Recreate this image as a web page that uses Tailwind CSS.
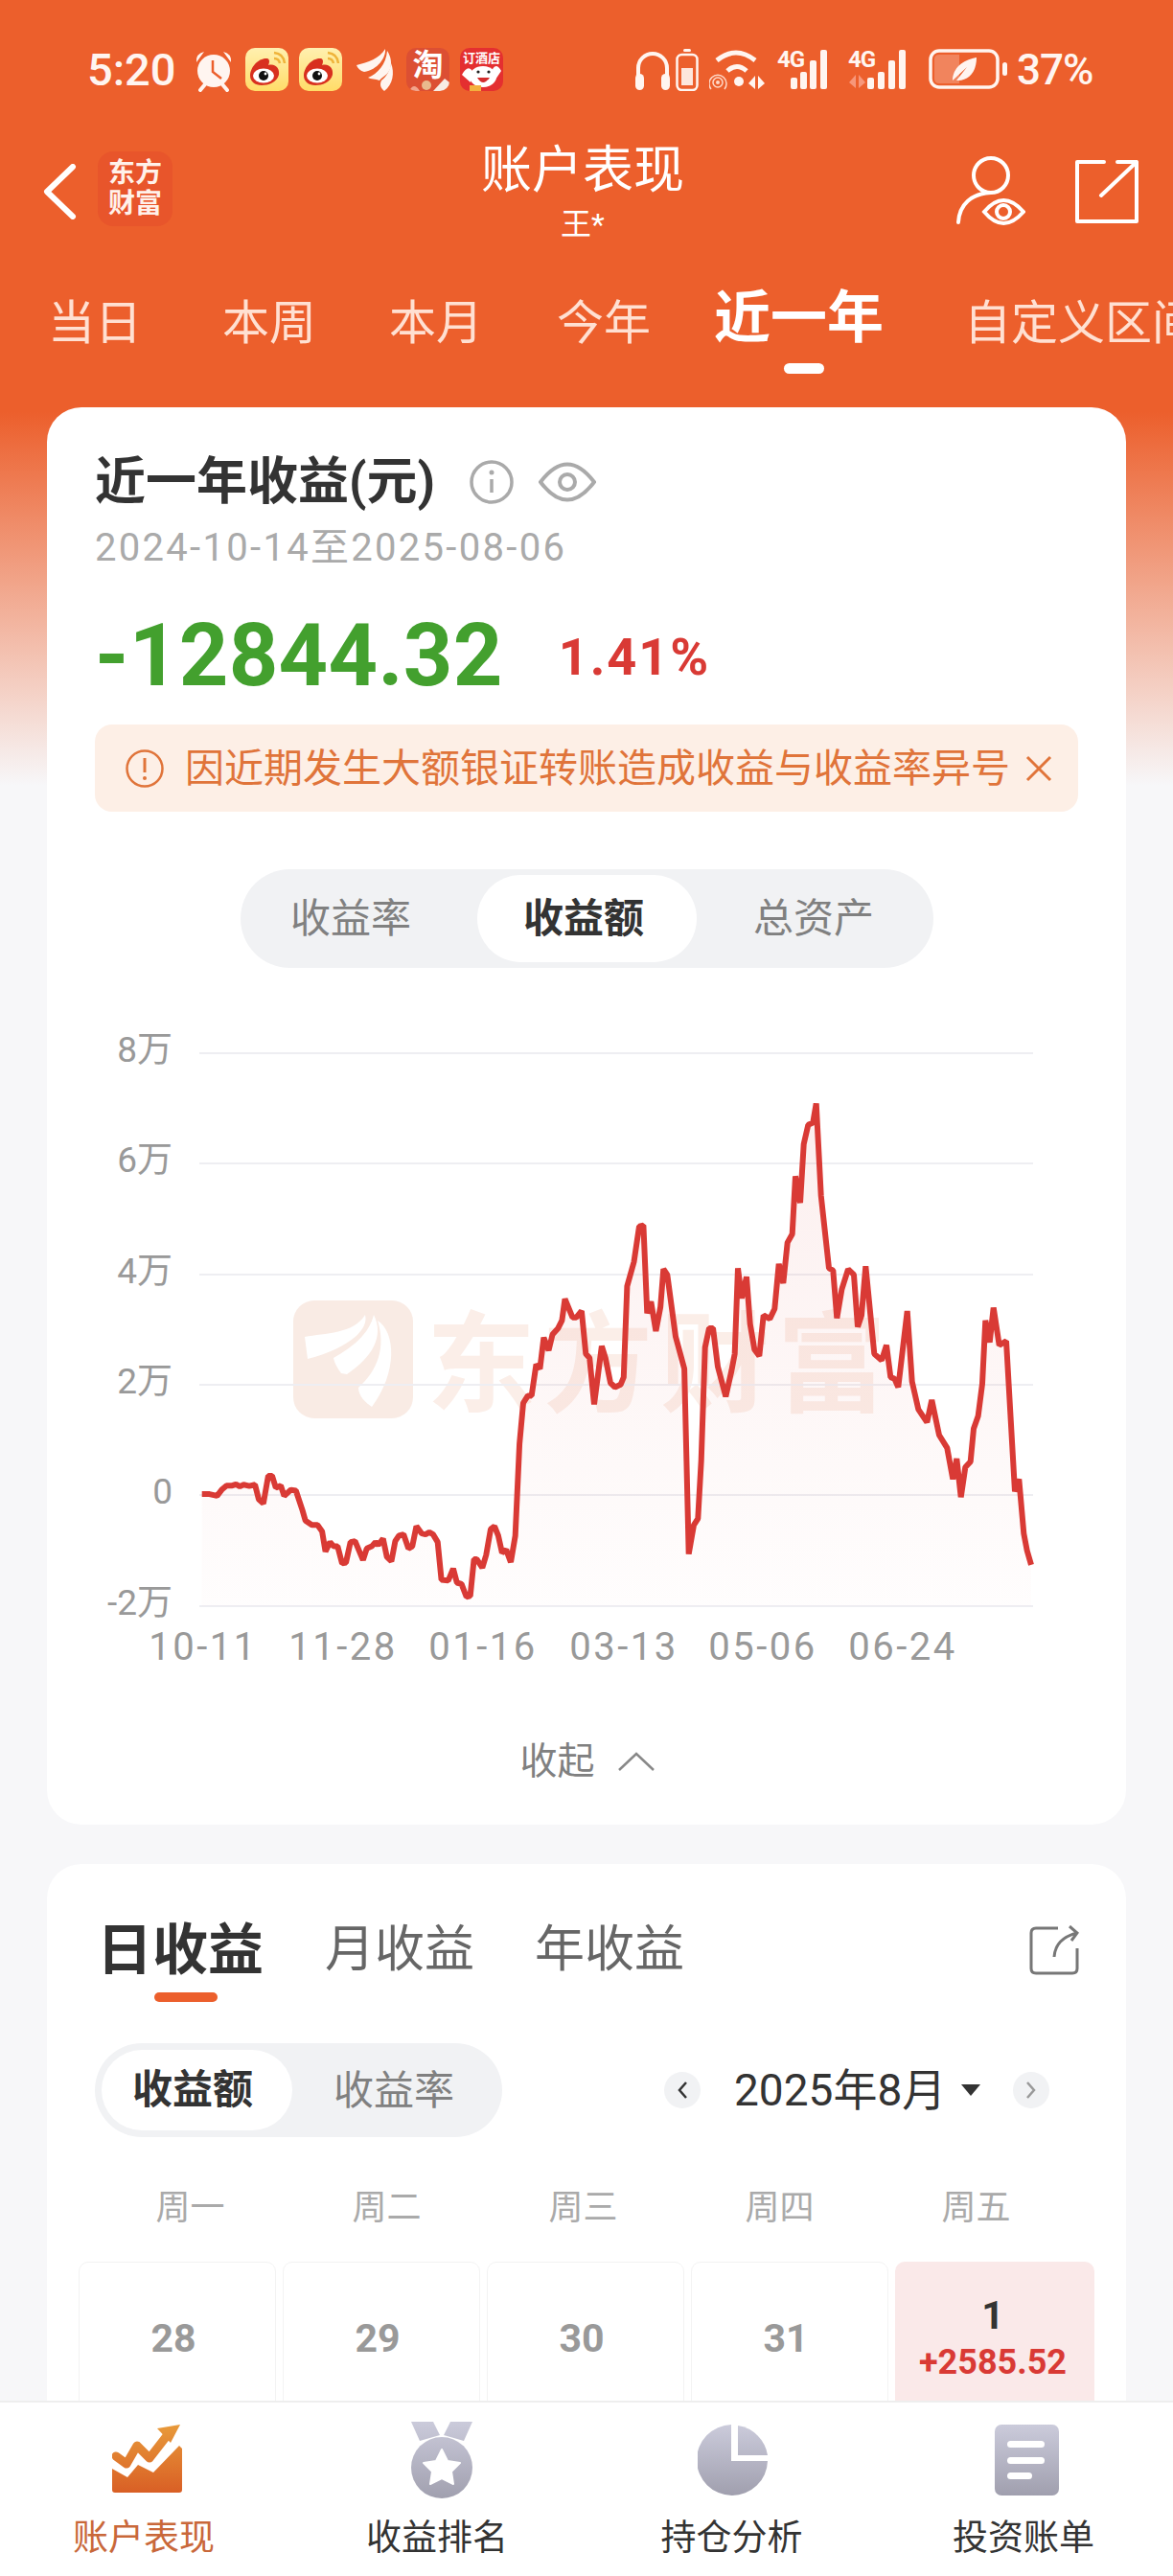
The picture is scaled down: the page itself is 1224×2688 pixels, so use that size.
<!DOCTYPE html>
<html>
  <head>
    <meta charset="utf-8" />
    <script src="https://cdn.jsdelivr.net/npm/@tailwindcss/browser@4"></script>
  </head>
  <body class="bg-white">
    <div class="w-[1224px] h-[2688px] flex flex-col overflow-hidden font-['Roboto','Noto_Sans_CJK_SC',sans-serif] text-[#333]">
      <main class="flex-1 min-h-0 overflow-hidden bg-[linear-gradient(#ec5f2c_0,#ec5f2c_430px,#f7f7f9_820px)]">
        <!-- status bar -->
        <div class="h-[150px] pt-[50px] flex items-start text-[#fff5f0]">
          <span class="ml-[91px] w-[111px] text-[47px] leading-[46px] font-medium">5:20</span>
          <svg class="w-[42px] h-[45px] mt-[1px]" viewBox="0 0 42 45">
            <circle cx="21" cy="23" r="17" fill="#fff5f0" />
            <path d="M3 14 Q2 5 11 3 Z M39 14 Q40 5 31 3 Z" fill="#fff5f0" />
            <path d="M7 43 L12 37 M35 43 L30 37" stroke="#fff5f0" stroke-width="4" stroke-linecap="round" />
            <path d="M20 12 V24 L29 31" fill="none" stroke="#ec5f2c" stroke-width="2.5" />
          </svg>
          <svg class="w-[45px] h-[45px] ml-[12px]" viewBox="0 0 45 45">
            <defs><linearGradient id="wb" x1="0" y1="0" x2="0" y2="1"><stop offset="0" stop-color="#fff0b0" /><stop offset="1" stop-color="#ffdc68" /></linearGradient></defs>
            <rect width="45" height="45" rx="10" fill="url(#wb)" />
            <path d="M5 29 C5 20 14 10 23 11 C26 12 25 16 24 18 C32 16 36 22 35 28 C33 36 24 39 17 39 C10 39 5 35 5 29Z" fill="#d8301f" />
            <ellipse cx="19" cy="29" rx="11" ry="7.5" fill="#fff" />
            <circle cx="19" cy="29" r="5" fill="#111" />
            <circle cx="21" cy="27" r="1.4" fill="#fff" />
            <path d="M30 5 Q40 6 41 16 M30 11 Q35 11 36 16" fill="none" stroke="#efb33a" stroke-width="2.5" />
          </svg>
          <svg class="w-[45px] h-[45px] ml-[11px]" viewBox="0 0 45 45">
            <rect width="45" height="45" rx="10" fill="url(#wb)" />
            <path d="M5 29 C5 20 14 10 23 11 C26 12 25 16 24 18 C32 16 36 22 35 28 C33 36 24 39 17 39 C10 39 5 35 5 29Z" fill="#d8301f" />
            <ellipse cx="19" cy="29" rx="11" ry="7.5" fill="#fff" />
            <circle cx="19" cy="29" r="5" fill="#111" />
            <circle cx="21" cy="27" r="1.4" fill="#fff" />
            <path d="M30 5 Q40 6 41 16 M30 11 Q35 11 36 16" fill="none" stroke="#efb33a" stroke-width="2.5" />
          </svg>
          <svg class="w-[40px] h-[45px] ml-[15px]" viewBox="0 0 40 45">
            <path d="M0 18 C12 15 24 11 30 1 C31 10 22 23 8 25 C4 24 1 21 0 18Z" fill="#fff5f0" />
            <path d="M12 31 C22 27 31 17 32 3 C36 9 37 16 35 22 C33 28 27 30 24 34 C20 32 15 33 12 31Z" fill="#fff5f0" />
            <path d="M36 16 C40 26 38 38 29 45 C25 42 24 38 26 34 C31 30 35 24 36 16Z" fill="#fff5f0" />
          </svg>
          <div class="relative w-[45px] h-[45px] ml-[12px] rounded-[10px] bg-[#dc4f33] flex justify-center overflow-hidden">
            <span class="text-[32px] leading-[36px] font-bold text-white">淘</span>
            <svg class="absolute left-0 bottom-0 w-[45px] h-[14px]" viewBox="0 0 45 14">
              <path d="M3 14 Q8 4 14 14 Z" fill="#f2a48c" />
              <circle cx="21" cy="8" r="5" fill="#e9b98d" />
              <path d="M28 14 L40 1 L45 5 V14Z" fill="#f7ece4" />
            </svg>
          </div>
          <div class="w-[45px] h-[45px] ml-[11px] rounded-[10px] bg-[#e42f30] overflow-hidden relative">
            <span class="absolute left-[3px] top-[4px] text-[13px] leading-[14px] font-bold text-white whitespace-nowrap">订酒店</span>
            <svg class="absolute inset-0" viewBox="0 0 45 45">
              <ellipse cx="24" cy="30" rx="14" ry="11" fill="#fff" />
              <path d="M2 28 Q8 17 13 24 L11 36 Z M43 24 Q38 15 34 22 L37 33Z" fill="#fff" />
              <path d="M18 31 Q24 41 31 31 Z" fill="#d42c2c" />
              <circle cx="19" cy="25" r="1.6" fill="#222" /><circle cx="30" cy="25" r="1.6" fill="#222" />
              <rect x="10" y="39" width="12" height="6" fill="#f3b03e" />
            </svg>
          </div>
          <svg class="w-[38px] h-[42px] ml-[137px] mt-[3px]" viewBox="0 0 38 42">
            <path d="M4 28 V18 A15 15 0 0 1 34 18 V28" fill="none" stroke="#fff5f0" stroke-width="4" />
            <rect x="1" y="24" width="9" height="17" rx="4.5" fill="#fff5f0" />
            <rect x="28" y="24" width="9" height="17" rx="4.5" fill="#fff5f0" />
          </svg>
          <svg class="w-[24px] h-[44px] ml-[5px] mt-[1px]" viewBox="0 0 24 44">
            <rect x="8" y="0" width="8" height="3" rx="1.5" fill="#fff5f0" />
            <rect x="1.5" y="6" width="21" height="37" rx="5" fill="none" stroke="#fff5f0" stroke-width="2.5" />
            <rect x="6" y="20" width="12" height="18" fill="#fff5f0" opacity=".9" />
          </svg>
          <svg class="w-[60px] h-[44px] ml-[11px] mt-[1px]" viewBox="0 0 60 44">
            <path d="M8 12 Q28 -4 48 12" fill="none" stroke="#fff5f0" stroke-width="5" />
            <path d="M19 23 Q29 14 39 23" fill="none" stroke="#fff5f0" stroke-width="5" />
            <circle cx="31" cy="34" r="5" fill="#fff5f0" />
            <circle cx="9" cy="35" r="2" fill="#ffd9c8" />
            <circle cx="9" cy="35" r="5" fill="none" stroke="#ffd9c8" stroke-width="1.5" />
            <path d="M2 42 A 9 9 0 1 1 16 42" fill="none" stroke="#ffd9c8" stroke-width="1.5" />
            <path d="M48 28 V42 L41 36 Z M51 28 V42 L58 36 Z" fill="#fff5f0" />
          </svg>
          <div class="relative w-[62px] h-[44px] ml-[11px] mt-[1px]">
            <span class="absolute left-0 top-0 text-[24px] leading-[22px] font-bold tracking-[-1px]">4G</span>
            <svg class="absolute left-[14px] top-0 w-[48px] h-[44px]" viewBox="0 0 48 44">
              <rect x="0" y="30" width="7" height="12" rx="2" fill="#fff5f0" />
              <rect x="10" y="24" width="7" height="18" rx="2" fill="#fff5f0" />
              <rect x="20" y="12" width="7" height="30" rx="2" fill="#fff5f0" />
              <rect x="31" y="1" width="7" height="41" rx="2" fill="#fff5f0" />
            </svg>
          </div>
          <div class="relative w-[68px] h-[44px] ml-[12px] mt-[1px]">
            <span class="absolute left-0 top-0 text-[24px] leading-[22px] font-bold tracking-[-1px]">4G</span>
            <svg class="absolute left-0 top-0 w-[68px] h-[44px]" viewBox="0 0 68 44">
              <path d="M8 27 V41 L1 35 Z M11 27 V41 L18 35 Z" fill="#f7977a" />
              <rect x="20" y="30" width="7" height="12" rx="2" fill="#fff5f0" />
              <rect x="31" y="24" width="7" height="18" rx="2" fill="#fff5f0" />
              <rect x="42" y="12" width="7" height="30" rx="2" fill="#fff5f0" />
              <rect x="53" y="1" width="7" height="41" rx="2" fill="#fff5f0" />
            </svg>
          </div>
          <svg class="w-[84px] h-[44px] ml-[16px] mt-[1px]" viewBox="0 0 84 44">
            <rect x="2" y="2" width="70" height="38" rx="9" fill="none" stroke="#fff5f0" stroke-width="3.5" />
            <path d="M6 11 Q6 6 11 6 H32 V36 H11 Q6 36 6 31 Z" fill="#fff5f0" fill-opacity=".25" />
            <path d="M25 33 C25 20 36 11 50 9 C50 24 42 34 29 33 L40 19 Z" fill="#fff5f0" />
            <rect x="77" y="14" width="5" height="14" rx="2.5" fill="#fff5f0" />
          </svg>
          <span class="ml-[8px] text-[44px] leading-[46px] font-medium tracking-[-1px]">37%</span>
        </div>

        <!-- title row -->
        <div class="h-[100px] grid grid-cols-[1fr_auto_1fr] text-white">
          <div class="flex items-start pl-[44px]">
            <svg class="w-[36px] h-[58px] mt-[21px]" viewBox="0 0 36 58">
              <path d="M32 3 L5 29 L32 55" fill="none" stroke="#fff" stroke-width="6" stroke-linecap="round" stroke-linejoin="round" />
            </svg>
            <div class="ml-[22px] mt-[8px] w-[78px] h-[78px] rounded-[16px] bg-[#e8552b] flex flex-col items-center justify-center text-[28px] leading-[32px] font-bold text-[#fff1ea]">
              <span>东方</span><span>财富</span>
            </div>
          </div>
          <div class="flex flex-col items-center pr-[8px]">
            <span class="text-[53px] leading-[56px]">账户表现</span>
            <span class="mt-[9px] text-[32px] leading-[38px]">王*</span>
          </div>
          <div class="flex items-start justify-end pr-[36px] pt-[13px]">
            <svg class="w-[72px] h-[72px]" viewBox="0 0 72 72">
              <circle cx="36" cy="20" r="18" fill="none" stroke="#fff" stroke-width="4" />
              <path d="M2 69 C3 50 16 39 36 38" fill="none" stroke="#fff" stroke-width="4" stroke-linecap="round" />
              <path d="M29 58 Q49 34 70 58 Q49 82 29 58Z" fill="#ec5f2c" stroke="#fff" stroke-width="4" />
              <circle cx="49" cy="58" r="7" fill="none" stroke="#fff" stroke-width="4" />
            </svg>
            <svg class="w-[66px] h-[66px] ml-[52px] mt-[4px]" viewBox="0 0 66 66">
              <path d="M30 2 H2 V64 H64 V2 L44 2 M64 2 L27 37" fill="none" stroke="#fff" stroke-width="4" stroke-linejoin="round" stroke-linecap="round" />
            </svg>
          </div>
        </div>

        <!-- period tabs -->
        <div class="h-[175px] mt-[47px] pt-[3px] pl-[50px] flex items-start text-[49px] leading-[56px] text-[#ffe0d2] whitespace-nowrap overflow-hidden">
          <span class="mr-[84px] mt-[10px]">当日</span>
          <span class="mr-[76px] mt-[10px]">本周</span>
          <span class="mr-[77px] mt-[10px]">本月</span>
          <span class="mr-[66px] mt-[10px]">今年</span>
          <span class="relative mr-[84px] text-[59px] leading-[64px] font-bold text-white">
            近一年
            <i class="absolute left-[73px] top-[79px] w-[42px] h-[11px] rounded-full bg-white"></i>
          </span>
          <span class="mt-[10px]">自定义区间</span>
        </div>

        <!-- income card -->
        <section class="relative -mt-[47px] mx-[49px] h-[1479px] rounded-[36px] bg-white pt-[46px]">
          <div class="ml-[50px] flex items-center">
            <h2 class="text-[53px] leading-[64px] font-bold text-[#333]">近一年收益(元)</h2>
            <svg class="w-[46px] h-[46px] ml-[36px]" viewBox="0 0 46 46">
              <circle cx="23" cy="23" r="21" fill="none" stroke="#aaa" stroke-width="3.5" />
              <circle cx="23" cy="13" r="2.5" fill="#aaa" />
              <path d="M23 20 V34" stroke="#aaa" stroke-width="3.5" />
            </svg>
            <svg class="w-[60px] h-[46px] ml-[26px]" viewBox="0 0 60 46">
              <path d="M2 23 Q30 -14 58 23 Q30 60 2 23Z" fill="none" stroke="#aaa" stroke-width="4" />
              <circle cx="30" cy="23" r="8" fill="none" stroke="#aaa" stroke-width="4" />
            </svg>
          </div>
          <p class="ml-[50px] mt-[12px] text-[40px] leading-[50px] tracking-[2.3px] text-[#aaa]">2024-10-14至2025-08-06</p>
          <div class="ml-[50px] mt-[44px] flex items-center h-[88px]">
            <span class="text-[90px] leading-[88px] font-bold tracking-[0.3px] text-[#43a02e]">-12844.32</span>
            <span class="ml-[58px] mt-[2px] text-[54px] leading-[60px] font-bold tracking-[2px] text-[#d93a35]">1.41%</span>
          </div>
          <div class="mx-[50px] mt-[27px] h-[91px] rounded-[18px] bg-[#fdefe6] flex items-center pl-[32px] text-[#e0743a]">
            <svg class="w-[40px] h-[40px] shrink-0" viewBox="0 0 40 40">
              <circle cx="20" cy="20" r="18.5" fill="none" stroke="#e0743a" stroke-width="2.5" />
              <path d="M20 9 V24" stroke="#e0743a" stroke-width="3" />
              <circle cx="20" cy="30" r="2" fill="#e0743a" />
            </svg>
            <span class="ml-[22px] text-[41px] leading-[50px] whitespace-nowrap">因近期发生大额银证转账造成收益与收益率异号</span>
            <svg class="w-[28px] h-[28px] ml-[16px] shrink-0" viewBox="0 0 28 28">
              <path d="M2 2 L26 26 M26 2 L2 26" stroke="#e0743a" stroke-width="3" />
            </svg>
          </div>
          <div class="mx-auto mt-[60px] w-[723px] h-[103px] rounded-full bg-[#f1f2f4] grid grid-cols-[247px_229px_247px] items-center text-center text-[42px] text-[#808080]">
            <span class="pr-[16px]">收益率</span>
            <span class="h-[91px] leading-[91px] pr-[6px] rounded-full bg-white font-bold text-[#333]">收益额</span>
            <span class="pr-[2px]">总资产</span>
          </div>

          <!-- trend chart, drawn in card coordinates -->
          <svg id="chart" class="mt-[50px] block" width="1126" height="690" viewBox="0 0 1126 690">
            <defs>
              <linearGradient id="areaFill" gradientUnits="userSpaceOnUse" x1="0" y1="40" x2="0" y2="616">
                <stop offset="0" stop-color="#d93a35" stop-opacity=".09" />
                <stop offset="1" stop-color="#d93a35" stop-opacity=".01" />
              </linearGradient>
            </defs>
            <rect x="257" y="297" width="125" height="123" rx="22" fill="#f9ebe4" />
            <g fill="#fff">
              <path d="M269 335 C290 331 320 332 332 312 C336 326 318 346 272 358 Z" />
              <path d="M341 312 C352 334 340 356 313 374 L307 373 C303 368 300 362 299 357 C320 345 336 332 341 312Z" />
              <path d="M345 318 C364 330 366 372 339 408 C333 404 325 397 325 388 C345 370 354 346 345 318Z" />
            </g>
            <text x="396" y="404" font-size="114" font-weight="700" letter-spacing="8" fill="#fbeee8">东方财富</text>
            <path d="M159 39 H1029 M159 154 H1029 M159 270 H1029 M159 385 H1029 M159 500 H1029 M159 616 H1029" stroke="#eeeef2" stroke-width="2" />
            <path id="area" fill="url(#areaFill)" />
            <polyline id="line" fill="none" stroke="#d93a35" stroke-width="6" stroke-linejoin="bevel" />
            <g font-size="37" fill="#999" text-anchor="end">
              <text x="131" y="48">8万</text>
              <text x="131" y="163">6万</text>
              <text x="131" y="279">4万</text>
              <text x="131" y="394">2万</text>
              <text x="131" y="509">0</text>
              <text x="131" y="625">-2万</text>
            </g>
            <g font-size="40" fill="#999" text-anchor="middle" letter-spacing="2.5">
              <text x="163" y="672">10-11</text>
              <text x="309" y="672">11-28</text>
              <text x="455" y="672">01-16</text>
              <text x="602" y="672">03-13</text>
              <text x="747" y="672">05-06</text>
              <text x="893" y="672">06-24</text>
            </g>
          </svg>
          <div class="mt-[60px] flex justify-center items-center text-[39px] leading-[56px] text-[#808080]">
            <span class="ml-[2px]">收起</span>
            <svg class="w-[40px] h-[22px] ml-[23px]" viewBox="0 0 40 22">
              <path d="M2 20 L20 3 L38 20" fill="none" stroke="#888" stroke-width="2.5" />
            </svg>
          </div>
        </section>

        <!-- daily income card -->
        <section class="mt-[41px] mx-[49px] h-[700px] rounded-t-[36px] bg-white pt-[58px]">
          <div class="flex items-start pl-[52px] pr-[49px]">
            <span class="relative text-[58px] leading-[64px] font-bold text-[#333]">
              日收益
              <i class="absolute left-[60px] top-[76px] w-[66px] h-[10px] rounded-full bg-[#ec5f2c]"></i>
            </span>
            <span class="ml-[64px] text-[52px] leading-[64px] text-[#666]">月收益</span>
            <span class="ml-[63px] text-[52px] leading-[64px] text-[#666]">年收益</span>
            <svg class="w-[52px] h-[52px] ml-auto mt-[6px]" viewBox="0 0 52 52">
              <path d="M30 3 H7 Q2 3 2 8 V45 Q2 50 7 50 H45 Q50 50 50 45 V24" fill="none" stroke="#777" stroke-width="3" />
              <path d="M26 33 C27 20 34 12 50 8 M42 1 L50 8 L44 16" fill="none" stroke="#777" stroke-width="3" />
            </svg>
          </div>
          <div class="mt-[65px] flex items-center pl-[50px]">
            <div class="w-[425px] h-[98px] rounded-full bg-[#f1f2f4] p-[7px] flex items-center text-[42px] text-[#808080]">
              <span class="w-[199px] h-[84px] leading-[84px] pr-[9px] rounded-full bg-white text-center font-bold text-[#333]">收益额</span>
              <span class="ml-[43px]">收益率</span>
            </div>
            <span class="ml-[169px] w-[38px] h-[38px] rounded-full bg-[#f1f2f4] flex items-center justify-center">
              <svg class="w-[12px] h-[20px]" viewBox="0 0 12 20"><path d="M10 2 L3 10 L10 18" fill="none" stroke="#333" stroke-width="2.5" /></svg>
            </span>
            <span class="ml-[35px] text-[46px] leading-[56px] text-[#333]">2025年8月</span>
            <svg class="w-[22px] h-[14px] ml-[15px]" viewBox="0 0 22 14"><path d="M1 1 H21 L11 13 Z" fill="#333" /></svg>
            <span class="ml-[33px] w-[38px] h-[38px] rounded-full bg-[#f1f2f4] flex items-center justify-center">
              <svg class="w-[12px] h-[20px]" viewBox="0 0 12 20"><path d="M2 2 L9 10 L2 18" fill="none" stroke="#999" stroke-width="2.5" /></svg>
            </span>
          </div>
          <div class="mt-[52px] ml-[47px] grid grid-cols-5 w-[1025px] text-center text-[36px] leading-[44px] text-[#aaa]">
            <span>周一</span>
            <span>周二</span>
            <span>周三</span>
            <span>周四</span>
            <span>周五</span>
          </div>
          <div class="mt-[34px] ml-[33px] grid grid-cols-[206px_206px_206px_206px_208px] gap-x-[7px] h-[180px] text-center">
            <div class="border border-[#f3f3f3] rounded-[10px] pt-[55px] pr-[8px] text-[41px] leading-[48px] font-bold text-[#999]">28</div>
            <div class="border border-[#f3f3f3] rounded-[10px] pt-[55px] pr-[8px] text-[41px] leading-[48px] font-bold text-[#999]">29</div>
            <div class="border border-[#f3f3f3] rounded-[10px] pt-[55px] pr-[8px] text-[41px] leading-[48px] font-bold text-[#999]">30</div>
            <div class="border border-[#f3f3f3] rounded-[10px] pt-[55px] pr-[8px] text-[41px] leading-[48px] font-bold text-[#999]">31</div>
            <div class="rounded-[10px] bg-[#fae9e9] pt-[32px] pr-[4px] font-bold">
              <div class="text-[41px] leading-[48px] text-[#333]">1</div>
              <div class="mt-[3px] text-[36px] leading-[44px] text-[#d93a35]">+2585.52</div>
            </div>
          </div>
        </section>
      </main>

      <!-- bottom nav -->
      <nav class="shrink-0 h-[183px] border-t-2 border-[#eeeeee] bg-white grid grid-cols-4 text-center text-[37px] leading-[44px]">
        <div class="flex flex-col items-center pr-[6px] pt-[23px] text-[#c9683a]">
          <svg class="w-[73px] h-[72px] ml-[6px]" viewBox="0 0 73 72">
            <defs><linearGradient id="navOn" gradientUnits="userSpaceOnUse" x1="0" y1="0" x2="0" y2="71"><stop offset="0" stop-color="#e89a3a" /><stop offset="1" stop-color="#d95f25" /></linearGradient></defs>
            <path d="M0 46 L16 55 L27 42 L43 50 L70 22 L73 25 V68 Q73 71 70 71 H3 Q0 71 0 68Z" fill="url(#navOn)" />
            <path d="M4 33 L15 41 L26 22 L39 35 L60 8" fill="none" stroke="url(#navOn)" stroke-width="9" stroke-linecap="round" stroke-linejoin="round" />
            <path d="M47 4 L71 0 L61 19 Z" fill="url(#navOn)" />
          </svg>
          <span class="mt-[25px]">账户表现</span>
        </div>
        <div class="flex flex-col items-center pr-[6px] pt-[19px]">
          <svg class="w-[64px] h-[82px] ml-[10px]" viewBox="0 0 64 82">
            <defs><linearGradient id="navOff" gradientUnits="userSpaceOnUse" x1="0" y1="0" x2="0" y2="82"><stop offset="0" stop-color="#cbcbdb" /><stop offset="1" stop-color="#a09fae" /></linearGradient></defs>
            <path d="M0 1 H23 L30 15 L9 21 Z M64 1 H41 L34 15 L55 21 Z" fill="url(#navOff)" />
            <circle cx="32" cy="49" r="32" fill="url(#navOff)" />
            <path d="M32 30 L38 42 L51 44 L42 53 L44 66 L32 60 L20 66 L22 53 L13 44 L26 42 Z" fill="#fff" stroke="#fff" stroke-width="2" stroke-linejoin="round" />
          </svg>
          <span class="mt-[19px]">收益排名</span>
        </div>
        <div class="flex flex-col items-center pt-[23px]">
          <svg class="w-[74px] h-[74px]" viewBox="0 0 74 74">
            <defs><linearGradient id="navOff2" gradientUnits="userSpaceOnUse" x1="0" y1="0" x2="0" y2="74"><stop offset="0" stop-color="#cbcbdb" /><stop offset="1" stop-color="#a09fae" /></linearGradient></defs>
            <path d="M35 0 V38 H73 A37 37 0 1 1 35 0Z" fill="url(#navOff2)" />
            <path d="M42 1 A37 37 0 0 1 73 32 H42Z" fill="url(#navOff2)" />
          </svg>
          <span class="mt-[23px] mr-[3px]">持仓分析</span>
        </div>
        <div class="flex flex-col items-center pr-[6px] pt-[23px]">
          <svg class="w-[67px] h-[74px] ml-[6px]" viewBox="0 0 67 74">
            <defs><linearGradient id="navOff3" gradientUnits="userSpaceOnUse" x1="0" y1="0" x2="0" y2="74"><stop offset="0" stop-color="#cbcbdb" /><stop offset="1" stop-color="#a09fae" /></linearGradient></defs>
            <rect width="67" height="74" rx="7" fill="url(#navOff3)" />
            <rect x="13" y="17" width="39" height="7" rx="3.5" fill="#fff" />
            <rect x="13" y="34" width="39" height="7" rx="3.5" fill="#fff" />
            <rect x="13" y="50" width="26" height="7" rx="3.5" fill="#fff" />
          </svg>
          <span class="mt-[23px]">投资账单</span>
        </div>
      </nav>
    </div>

    <script>
      // points traced off the reference crops, scaled to chart coordinates in toChart
      const left = [[280,1118],[300,1118],[320,1122],[332,1108],[345,1098],[360,1098],[370,1095],[380,1100],[390,1096],[405,1099],[420,1096],[430,1130],[442,1140],[455,1075],[465,1075],[475,1103],[488,1098],[497,1122],[515,1108],[528,1110],[545,1155],[553,1180],[570,1190],[585,1190],[597,1205],[606,1252],[618,1230],[628,1240],[638,1240],[650,1280],[660,1278],[672,1230],[684,1228],[705,1272],[715,1245],[728,1240],[738,1230],[745,1237],[758,1222],[768,1265],[780,1275],[790,1228],[800,1215],[812,1212],[825,1245],[835,1240],[846,1193],[860,1210],[870,1212],[880,1207],[890,1212],[902,1230],[912,1318],[930,1320],[943,1292],[953,1325],[965,1328],[978,1358],[988,1356],[998,1270],[1005,1270],[1020,1290],[1030,1260],[1042,1200],[1052,1193],[1062,1215],[1072,1255],[1083,1248],[1095,1277],[1107,1215],[1118,1000],[1128,905],[1140,888],[1150,888],[1162,815],[1172,825],[1182,752],[1195,782],[1205,745],[1220,730],[1230,712],[1238,662],[1258,705],[1268,705],[1282,690],[1293,790],[1303,800],[1315,908],[1335,772],[1345,800],[1358,858],[1370,868],[1385,862],[1393,845],[1402,632],[1420,575],[1434,492],[1445,490],[1455,695],[1465,668],[1478,737],[1490,680],[1498,592],[1508,605],[1530,750],[1553,825]];
      const right = [[356,1258],[372,1190],[385,1175],[395,1040],[407,775],[420,730],[432,730],[447,820],[472,890],[490,830],[500,790],[510,590],[522,660],[537,610],[548,720],[562,780],[577,795],[590,700],[610,708],[625,685],[638,580],[652,625],[665,530],[680,510],[690,375],[705,437],[716,300],[730,255],[745,250],[755,205],[770,420],[795,590],[808,595],[820,707],[835,640],[855,592],[873,605],[885,727],[897,700],[910,585],[937,790],[960,805],[975,770],[988,845],[1000,848],[1012,868],[1040,690],[1055,855],[1075,920],[1102,950],[1117,898],[1140,980],[1165,1010],[1183,1083],[1195,1035],[1208,1125],[1222,1055],[1238,1042],[1248,965],[1262,935],[1275,860],[1285,712],[1298,763],[1310,682],[1328,770],[1350,760],[1377,1112],[1390,1083],[1405,1210],[1415,1250],[1428,1283]];

      const toChart = (x0, sx) => ([x, y]) => [x0 + x / sx - 49, y / 2.24];
      const points = [...left.map(toChart(100, 2.529)), ...right.map(toChart(600, 3))];
      const joined = points.map((p) => p[0].toFixed(1) + "," + p[1].toFixed(1)).join(" ");

      document.getElementById("line").setAttribute("points", joined);
      document
        .getElementById("area")
        .setAttribute("d", "M" + joined + " L" + points[points.length - 1][0] + ",616 L" + points[0][0] + ",616 Z");
    </script>
  </body>
</html>
